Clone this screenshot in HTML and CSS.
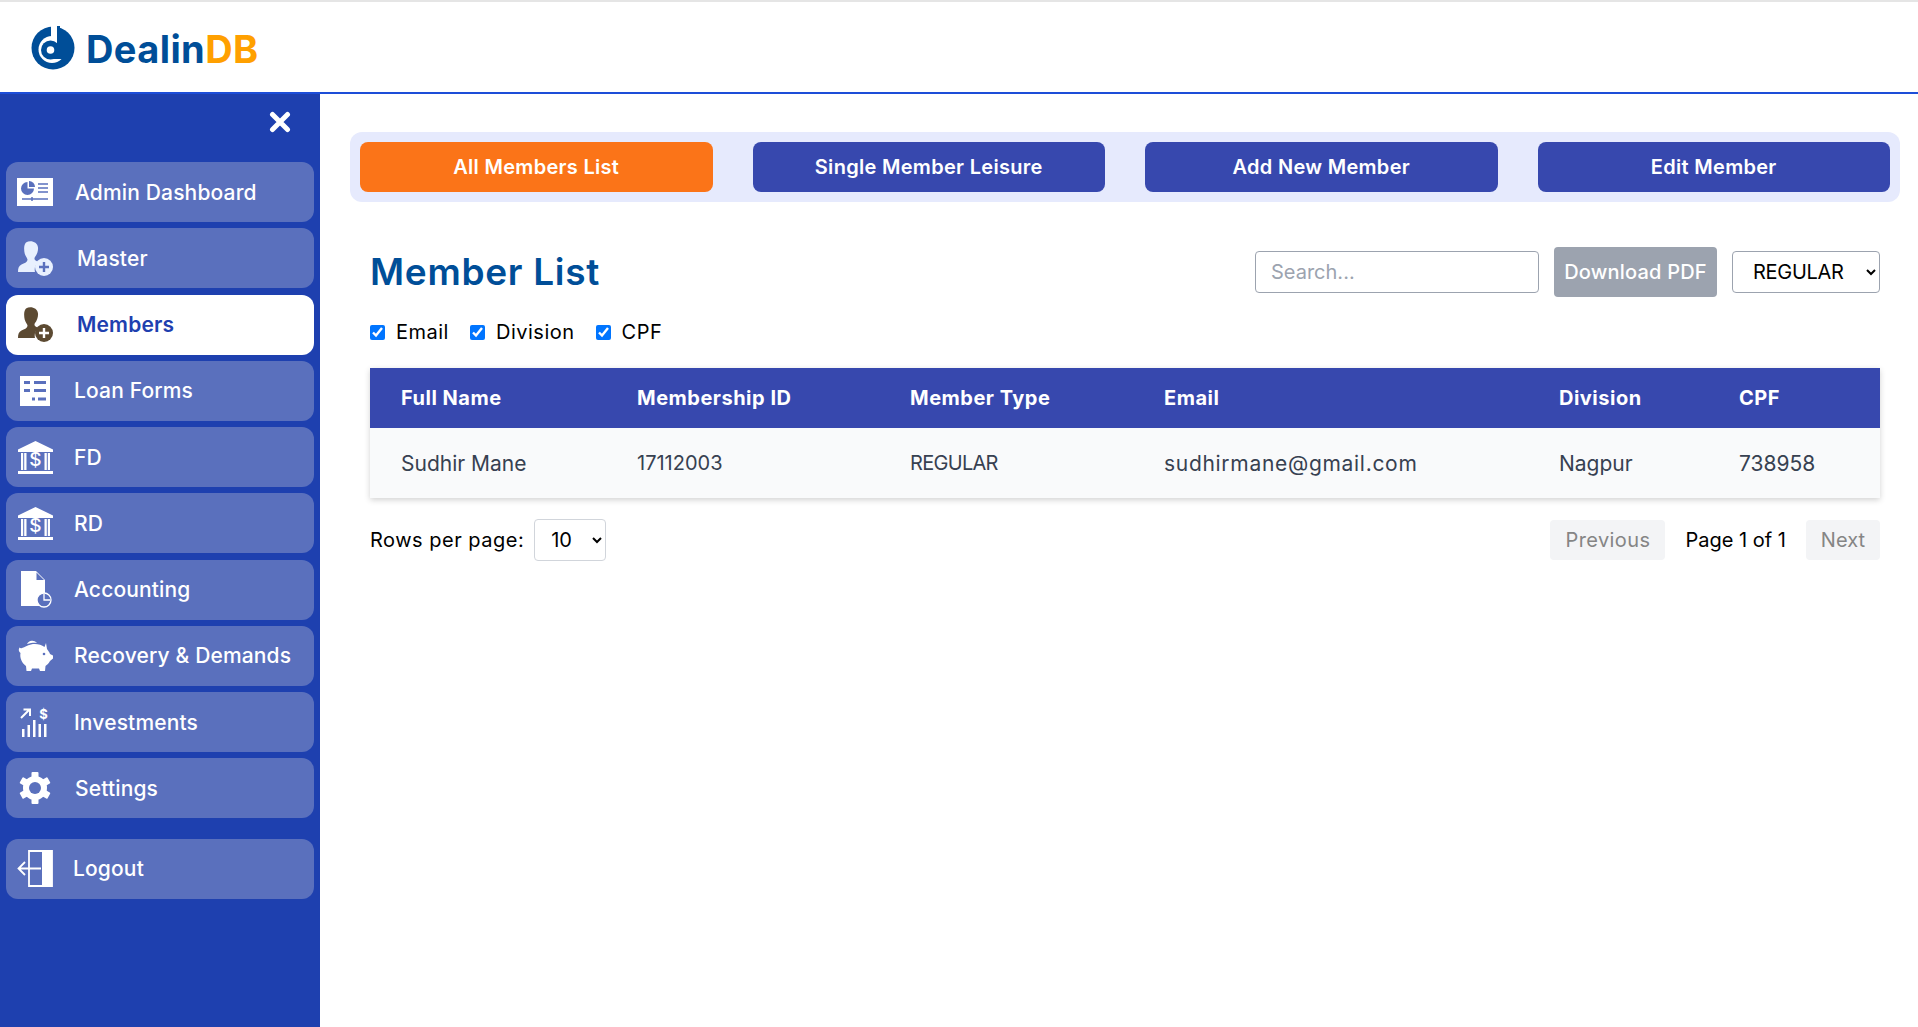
FILE: index.html
```html
<!DOCTYPE html>
<html lang="en">
<head>
    <meta charset="UTF-8">
    <meta name="viewport" content="width=device-width, initial-scale=1.0">
    <title>DealinDB - Member List</title>
    <link rel="stylesheet" href="styles.css">
</head>
<body>
    <svg class="defs" width="0" height="0">
        <symbol id="user-plus" viewBox="0 0 35 35">
            <path d="M8 1.500c4.500-2.600 11.500-.6 12 5 .3 3.500-1 7-3 9.500-1 1.500-.5 3 1 3.800l2.500 1.200c-3 2-4.500 6-3.500 10H0c0-4 .8-6 3.500-7.500 3-1.500 5.500-2 6-4.500.2-1.500-2-3.500-2.800-6.500C6 9 5.500 4 8 1.500z" fill="currentColor"/>
            <circle cx="26" cy="26" r="9" fill="currentColor"/>
            <path d="M26 21v10M21 26h10" stroke="var(--plus)" stroke-width="2.400"/>
        </symbol>
        <symbol id="bank" viewBox="0 0 35 33">
            <path d="M17.500 0 35 8.500v2.500H0V8.500z" fill="currentColor"/>
            <path d="M3 12h5.500v17H3zM26.500 12H32v17h-5.500z" fill="currentColor"/>
            <path d="M5.700 12v17M29.300 12v17" stroke="#5a70bd" stroke-width="1"/>
            <path d="M0 30h35v3H0z" fill="currentColor"/>
        </symbol>
    </svg>

    <header class="topbar">
        <svg class="logo-mark" viewBox="0 0 44 44">
            <circle cx="22" cy="22" r="21.500" fill="#004e98"/>
            <circle cx="21" cy="23.500" r="13.500" fill="#fff"/>
            <path d="M20 0h6v12h-6z" fill="#fff"/>
            <circle cx="19.500" cy="24" r="9.500" fill="#004e98"/>
            <path d="M26 0h3v6h7v27H19.500v-9H26z" fill="#004e98"/>
            <circle cx="19.500" cy="24" r="3.800" fill="#fff"/>
        </svg>
        <div class="logo-text">Dealin<span class="logo-db">DB</span></div>
    </header>

    <div class="layout">
        <aside class="sidebar">
            <div class="close-row">
                <svg class="close-icon" viewBox="0 0 22 22"><path d="M3.500 3.500l15 15M18.500 3.500l-15 15" stroke="#fff" stroke-width="5" stroke-linecap="round"/></svg>
            </div>
            <nav class="nav-list">
                <a class="nav-item" href="#">
                    <span class="nav-icon">
                        <svg width="36" height="28" viewBox="0 0 36 28">
                            <path d="M0 0h36v28H0z" fill="#fff"/>
                            <path d="M10.500 4a6.500 6.500 0 1 0 6.500 6.500h-6.500z" fill="#5a70bd"/>
                            <path d="M12 3v6h6a6 6 0 0 0-6-6z" fill="#5a70bd"/>
                            <path d="M21 6h10M21 10h10M21 14h10M5 21h26" stroke="#5a70bd" stroke-width="1.300"/>
                            <path d="M15 19v4" stroke="#5a70bd" stroke-width="1.500"/>
                        </svg>
                    </span>
                    <span class="nav-label shift-1">Admin Dashboard</span>
                </a>
                <a class="nav-item" href="#">
                    <span class="nav-icon"><svg class="icon-user" width="35" height="35"><use href="#user-plus"/></svg></span>
                    <span class="nav-label shift-3">Master</span>
                </a>
                <a class="nav-item active" href="#">
                    <span class="nav-icon"><svg class="icon-user" width="35" height="35"><use href="#user-plus"/></svg></span>
                    <span class="nav-label shift-3">Members</span>
                </a>
                <a class="nav-item" href="#">
                    <span class="nav-icon">
                        <svg width="30" height="30" viewBox="0 0 30 30">
                            <path d="M0 0h30v30H0z" fill="#fff"/>
                            <path d="M4 6.500h6M14 6.500h12M4 14.500h6M14 14.500h12M12 23h3M18 23h8" stroke="#5a70bd" stroke-width="3"/>
                        </svg>
                    </span>
                    <span class="nav-label">Loan Forms</span>
                </a>
                <a class="nav-item" href="#">
                    <span class="nav-icon">
                        <svg width="35" height="33" viewBox="0 0 35 33">
                            <use href="#bank" width="35" height="33"/>
                            <text x="17.500" y="25" text-anchor="middle" class="bank-sign">$</text>
                        </svg>
                    </span>
                    <span class="nav-label">FD</span>
                </a>
                <a class="nav-item" href="#">
                    <span class="nav-icon">
                        <svg width="35" height="33" viewBox="0 0 35 33">
                            <use href="#bank" width="35" height="33"/>
                            <text x="17.500" y="25" text-anchor="middle" class="bank-sign">$</text>
                        </svg>
                    </span>
                    <span class="nav-label">RD</span>
                </a>
                <a class="nav-item" href="#">
                    <span class="nav-icon">
                        <svg width="34" height="37" viewBox="0 0 34 37">
                            <path d="M3 0h15l9 9v26H3z" fill="#fff"/>
                            <path d="M18.500 1.500v7.500h7.500z" fill="#5a70bd"/>
                            <circle cx="26" cy="29" r="7" fill="#5a70bd" stroke="#fff" stroke-width="1.300"/>
                            <path d="M26 23v6h6" fill="none" stroke="#fff" stroke-width="1.300"/>
                        </svg>
                    </span>
                    <span class="nav-label">Accounting</span>
                </a>
                <a class="nav-item" href="#">
                    <span class="nav-icon">
                        <svg width="35" height="33" viewBox="0 0 35 33">
                            <path d="M4 9c3-1 5-2.500 9-3.500 5-1 10 0 13.500 2.500L28 4l1 6c1.500 2 2.500 3.500 3 5l3 1.500v3L32 22c-1 2-3 4-4.500 5l-.5 5h-5l-1-2.500h-7L13 32H8.500l-.5-5C4 24 1.500 19 2.500 14 1 13 0 11 1.500 8.500c.8.800 1.500 1 2.500.500z" fill="#fff"/>
                            <path d="M9 5a6 6 0 0 1 10-1c-3-.5-6 0-10 1z" fill="#fff"/>
                            <circle cx="26" cy="15" r="1.300" fill="#5a70bd"/>
                        </svg>
                    </span>
                    <span class="nav-label">Recovery &amp; Demands</span>
                </a>
                <a class="nav-item" href="#">
                    <span class="nav-icon">
                        <svg width="30" height="30" viewBox="0 0 30 30">
                            <path d="M1 11l8-8M3.500 2.500H10v6.500" fill="none" stroke="#fff" stroke-width="2"/>
                            <path d="M2 22h2.500v8H2zM7.500 18H10v12H7.500zM13 13h2.500v17H13zM18.500 17H21v13h-2.500zM24 17h2.500v13H24z" fill="#fff"/>
                            <text x="23.500" y="12" text-anchor="middle" class="invest-sign">$</text>
                        </svg>
                    </span>
                    <span class="nav-label">Investments</span>
                </a>
                <a class="nav-item" href="#">
                    <span class="nav-icon">
                        <svg width="36" height="32" viewBox="-16 -16 32 32">
                            <g fill="#fff">
                                <rect x="-3.500" y="-16" width="7" height="32" rx="1"/>
                                <rect x="-3.500" y="-16" width="7" height="32" rx="1" transform="rotate(60)"/>
                                <rect x="-3.500" y="-16" width="7" height="32" rx="1" transform="rotate(120)"/>
                                <circle r="12"/>
                            </g>
                            <circle r="6" fill="#5a70bd"/>
                        </svg>
                    </span>
                    <span class="nav-label shift-1">Settings</span>
                </a>
                <a class="nav-item logout" href="#">
                    <span class="nav-icon">
                        <svg width="36" height="37" viewBox="0 0 36 37">
                            <path d="M12 1h23v35H12z" fill="none" stroke="#fff" stroke-width="1.800"/>
                            <path d="M25 1h10v35H25z" fill="#fff"/>
                            <path d="M1 18.500h23M8 12l-6.500 6.500L8 25" fill="none" stroke="#fff" stroke-width="1.800"/>
                        </svg>
                    </span>
                    <span class="nav-label shift-back">Logout</span>
                </a>
            </nav>
        </aside>

        <main class="content">
            <div class="tabs">
                <button class="tab tab-active">All Members List</button>
                <button class="tab">Single Member Leisure</button>
                <button class="tab">Add New Member</button>
                <button class="tab">Edit Member</button>
            </div>

            <section class="panel">
                <div class="panel-head">
                    <h1 class="panel-title">Member List</h1>
                    <div class="panel-tools">
                        <input class="search" type="text" placeholder="Search...">
                        <button class="btn-pdf">Download PDF</button>
                        <select class="type-select"><option>REGULAR</option></select>
                    </div>
                </div>

                <div class="col-toggles">
                    <label class="col-toggle"><input type="checkbox" checked> Email</label>
                    <label class="col-toggle"><input type="checkbox" checked> Division</label>
                    <label class="col-toggle"><input type="checkbox" checked> CPF</label>
                </div>

                <table class="member-table">
                    <thead>
                        <tr>
                            <th class="c-name">Full Name</th>
                            <th class="c-id">Membership ID</th>
                            <th class="c-type">Member Type</th>
                            <th class="c-email">Email</th>
                            <th class="c-div">Division</th>
                            <th class="c-cpf">CPF</th>
                        </tr>
                    </thead>
                    <tbody>
                        <tr>
                            <td>Sudhir Mane</td>
                            <td class="cell-tight">17112003</td>
                            <td class="cell-tight cell-type">REGULAR</td>
                            <td class="cell-email">sudhirmane@gmail.com</td>
                            <td>Nagpur</td>
                            <td>738958</td>
                        </tr>
                    </tbody>
                </table>

                <div class="pager">
                    <div class="pager-rows">
                        <span class="rows-label">Rows per page:</span>
                        <select class="rows-select"><option>10</option></select>
                    </div>
                    <div class="pager-nav">
                        <button class="page-btn page-prev" disabled>Previous</button>
                        <span>Page 1 of 1</span>
                        <button class="page-btn" disabled>Next</button>
                    </div>
                </div>
            </section>
        </main>
    </div>
</body>
</html>
```

FILE: styles.css
```css
* {
    box-sizing: border-box;
}
html, body {
    height: 100%;
}
body {
    margin: 0;
    font-family: "Inter", "Noto Sans", sans-serif;
    background-color: #fff;
    color: #000;
    overflow: hidden;
}
.defs {
    position: absolute;
}
.bank-sign {
    font: 500 19px "Inter", sans-serif;
    fill: #fff;
}
.invest-sign {
    font: 700 13px "Inter", sans-serif;
    fill: #fff;
}

/* top bar */
.topbar {
    height: 94px;
    border-top: 2px solid #e5e5e5;
    border-bottom: 2px solid #1d4ed8;
    padding-left: 31px;
    display: flex;
    align-items: center;
    gap: 11px;
}
.logo-mark {
    width: 44px;
    height: 44px;
    margin-top: 2px;
}
.logo-text {
    margin-top: 3px;
    font-size: 38px;
    font-weight: 700;
    color: #004e98;
    letter-spacing: 0.4px;
}
.logo-db {
    color: #ffa000;
}

/* sidebar */
.layout {
    display: flex;
    height: calc(100% - 94px);
}
.sidebar {
    width: 320px;
    flex-shrink: 0;
    background-color: #1e40af;
    padding: 0 6px;
}
.close-row {
    height: 68px;
    display: flex;
    justify-content: flex-end;
    align-items: flex-start;
    padding: 17px 23px 0 0;
}
.close-icon {
    width: 22px;
    height: 22px;
}
.nav-list {
    display: flex;
    flex-direction: column;
    gap: 6.25px;
}
.nav-item {
    height: 60px;
    display: flex;
    align-items: center;
    padding-left: 11px;
    border-radius: 12px;
    background-color: #5a70bd;
    color: #fff;
    text-decoration: none;
    font-size: 21px;
    font-weight: 500;
    letter-spacing: 0.15px;
}
.nav-item.active {
    background-color: #fff;
    color: #1e40af;
    font-weight: 600;
    --plus: #fff;
}
.nav-item.logout {
    margin-top: 14px;
}
.nav-icon {
    width: 36px;
    height: 38px;
    margin-right: 21px;
    display: flex;
    align-items: center;
    justify-content: center;
    color: #fff;
}
.icon-user {
    color: #e8f0fe;
    --plus: #5a70bd;
}
.active .icon-user {
    color: #5c4a32;
    --plus: #fff;
}
.shift-1 {
    margin-left: 1px;
}
.shift-3 {
    margin-left: 3px;
}
.shift-back {
    margin-left: -1px;
}

/* main area */
.content {
    flex: 1;
    padding: 38px 18px 0 30px;
}
.tabs {
    height: 70px;
    padding: 10px;
    display: flex;
    gap: 40px;
    background-color: #e6eafd;
    border-radius: 12px;
}
.tab {
    flex: 1;
    border: 0;
    border-radius: 8px;
    background-color: #3748ae;
    color: #fff;
    font-family: inherit;
    font-size: 20px;
    font-weight: 600;
    letter-spacing: 0.3px;
}
.tab-active {
    background-color: #fb7418;
}
.panel {
    padding: 45px 20px 0;
}
.panel-head {
    display: flex;
    justify-content: space-between;
    align-items: center;
    height: 50px;
}
.panel-title {
    margin: 0;
    padding-bottom: 2px;
    font-size: 37px;
    font-weight: 600;
    color: #004e98;
    letter-spacing: 0.7px;
}
.panel-tools {
    display: flex;
    align-items: center;
    gap: 15px;
}
.search {
    width: 284px;
    height: 42px;
    padding: 0 15px;
    border: 1px solid #9ca3af;
    border-radius: 4px;
    font-family: inherit;
    font-size: 20px;
}
.search::placeholder {
    color: #9ca3af;
}
.btn-pdf {
    width: 163px;
    height: 50px;
    border: 0;
    border-radius: 4px;
    background-color: #9ca3af;
    color: #fff;
    font-family: inherit;
    font-size: 20px;
    font-weight: 500;
    letter-spacing: 0.2px;
    padding: 0;
}
.type-select {
    width: 148px;
    height: 42px;
    padding: 0 16px;
    border: 1px solid #9ca3af;
    border-radius: 4px;
    background-color: #fff;
    font-family: inherit;
    font-size: 20px;
    letter-spacing: -0.3px;
}
.col-toggles {
    display: flex;
    gap: 21px;
    margin-top: 20px;
    height: 30px;
    align-items: center;
}
.col-toggle {
    display: flex;
    align-items: center;
    gap: 11px;
    font-size: 20px;
    letter-spacing: 0.5px;
}
.col-toggle input {
    width: 15px;
    height: 15px;
    margin: 0;
}
.member-table {
    width: 100%;
    margin-top: 21px;
    border-collapse: collapse;
    table-layout: fixed;
    box-shadow: 0 2px 6px rgba(0, 0, 0, 0.18);
}
.member-table th {
    height: 60px;
    padding: 0 0 0 31px;
    background-color: #3748ae;
    color: #fff;
    font-size: 20px;
    font-weight: 700;
    letter-spacing: 0.5px;
    text-align: left;
}
.member-table td {
    height: 70px;
    padding: 0 0 0 31px;
    background-color: #f9fafb;
    color: #374151;
    font-size: 21px;
}
.member-table .cell-tight {
    font-size: 20px;
}
.member-table .cell-type {
    letter-spacing: -0.7px;
}
.member-table .cell-email {
    letter-spacing: 0.7px;
}
.c-name { width: 236px; }
.c-id { width: 273px; }
.c-type { width: 254px; }
.c-email { width: 395px; }
.c-div { width: 180px; }

/* pagination */
.pager {
    display: flex;
    justify-content: space-between;
    align-items: center;
    margin-top: 21px;
    font-size: 20px;
}
.pager-rows {
    display: flex;
    align-items: center;
    gap: 10px;
}
.rows-label {
    letter-spacing: 0.5px;
}
.rows-select {
    width: 72px;
    height: 42px;
    padding: 0 12px;
    border: 1px solid #d1d5db;
    border-radius: 4px;
    background-color: #fff;
    font-family: inherit;
    font-size: 20px;
}
.pager-nav {
    display: flex;
    align-items: center;
    gap: 20px;
}
.page-btn {
    height: 40px;
    padding: 0 15px;
    border: 0;
    border-radius: 4px;
    background-color: #f3f4f6;
    color: #858585;
    font-family: inherit;
    font-size: 20px;
}
.page-prev {
    letter-spacing: 0.4px;
}
```
